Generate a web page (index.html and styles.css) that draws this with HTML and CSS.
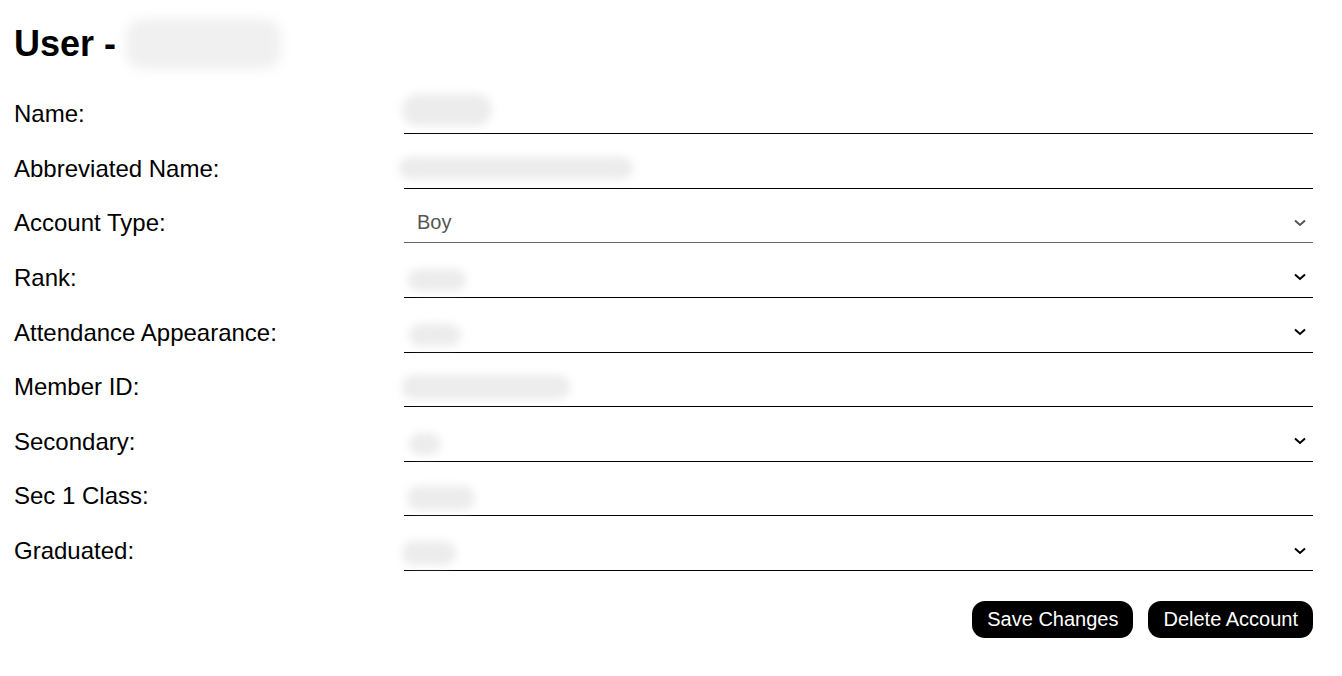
FILE: index.html
```html
<!DOCTYPE html>
<html lang="en">
<head>
<meta charset="utf-8">
<title>User</title>
<link rel="stylesheet" href="styles.css">
</head>
<body>
<div class="page">
  <h1 class="title">User - <span class="blob blob-title"></span></h1>
  <div class="form">
    <div class="label">Name:</div>
    <div class="field"><span class="blob b-name"></span></div>

    <div class="label">Abbreviated Name:</div>
    <div class="field"><span class="blob b-abbr"></span></div>

    <div class="label">Account Type:</div>
    <div class="field select disabled"><span class="value">Boy</span>
      <svg class="chev" width="12" height="8" viewBox="0 0 12 8"><path d="M1 1.5 L6 6 L11 1.5" fill="none" stroke="currentColor" stroke-width="2"/></svg>
    </div>

    <div class="label">Rank:</div>
    <div class="field select"><span class="blob b-rank"></span>
      <svg class="chev" width="12" height="8" viewBox="0 0 12 8"><path d="M1 1.5 L6 6 L11 1.5" fill="none" stroke="currentColor" stroke-width="2"/></svg>
    </div>

    <div class="label">Attendance Appearance:</div>
    <div class="field select"><span class="blob b-att"></span>
      <svg class="chev" width="12" height="8" viewBox="0 0 12 8"><path d="M1 1.5 L6 6 L11 1.5" fill="none" stroke="currentColor" stroke-width="2"/></svg>
    </div>

    <div class="label">Member ID:</div>
    <div class="field"><span class="blob b-member"></span></div>

    <div class="label">Secondary:</div>
    <div class="field select"><span class="blob b-sec"></span>
      <svg class="chev" width="12" height="8" viewBox="0 0 12 8"><path d="M1 1.5 L6 6 L11 1.5" fill="none" stroke="currentColor" stroke-width="2"/></svg>
    </div>

    <div class="label">Sec 1 Class:</div>
    <div class="field"><span class="blob b-class"></span></div>

    <div class="label">Graduated:</div>
    <div class="field select"><span class="blob b-grad"></span>
      <svg class="chev" width="12" height="8" viewBox="0 0 12 8"><path d="M1 1.5 L6 6 L11 1.5" fill="none" stroke="currentColor" stroke-width="2"/></svg>
    </div>
  </div>
  <div class="actions">
    <button class="btn">Save Changes</button>
    <button class="btn">Delete Account</button>
  </div>
</div>
</body>
</html>
```

FILE: styles.css
```css
html, body {
  margin: 0;
  padding: 0;
  background: #fff;
}

body {
  font-family: "Liberation Sans", Arial, sans-serif;
  color: #000;
}

.page {
  padding: 0 29px 0 14px;
}

.title {
  margin: 23px 0 0;
  height: 41px;
  font-size: 36px;
  line-height: 41px;
  font-weight: bold;
  display: flex;
  align-items: center;
  white-space: pre;
}

.blob {
  display: inline-block;
  background: #ececec;
  border-radius: 16px;
  filter: blur(4px);
}

.blob-title {
  width: 155px;
  height: 50px;
  margin: -5px 0 -5px 0;
  background: #f0f0f0;
  filter: blur(6px);
}

.form {
  display: grid;
  grid-template-columns: 390px 1fr;
  row-gap: 14.625px;
  margin-top: 30px;
  align-items: center;
}

.label {
  font-size: 24px;
  line-height: 28px;
}

.field {
  height: 40px;
  box-sizing: border-box;
  border-bottom: 1px solid #000;
  display: flex;
  align-items: center;
  padding: 0 7px 0 13px;
  font-size: 20px;
}

.select .chev {
  margin-left: auto;
  color: #000;
}

.disabled {
  border-bottom-color: #666;
}

.disabled .value {
  color: #555;
}

.disabled .chev {
  color: #555;
}

.b-name { width: 90px; height: 32px; margin-left: -15px; margin-top: -8px; }
.b-abbr { width: 234px; height: 22px; margin-left: -18px; }
.b-rank { width: 58px; height: 22px; margin-left: -9px; margin-top: 6px; }
.b-att { width: 52px; height: 22px; margin-left: -8px; margin-top: 6px; }
.b-member { width: 168px; height: 24px; margin-left: -15px; }
.b-sec { width: 32px; height: 22px; margin-left: -8px; margin-top: 6px; }
.b-class { width: 68px; height: 24px; margin-left: -10px; margin-top: 4px; }
.b-grad { width: 54px; height: 24px; margin-left: -15px; margin-top: 4px; }

.actions {
  display: flex;
  justify-content: flex-end;
  gap: 15px;
  margin-top: 30px;
}

.btn {
  font-family: "Liberation Sans", Arial, sans-serif;
  font-size: 20px;
  line-height: 23px;
  padding: 7px 15px;
  border: none;
  border-radius: 13px;
  background: #000;
  color: #fff;
}
```
